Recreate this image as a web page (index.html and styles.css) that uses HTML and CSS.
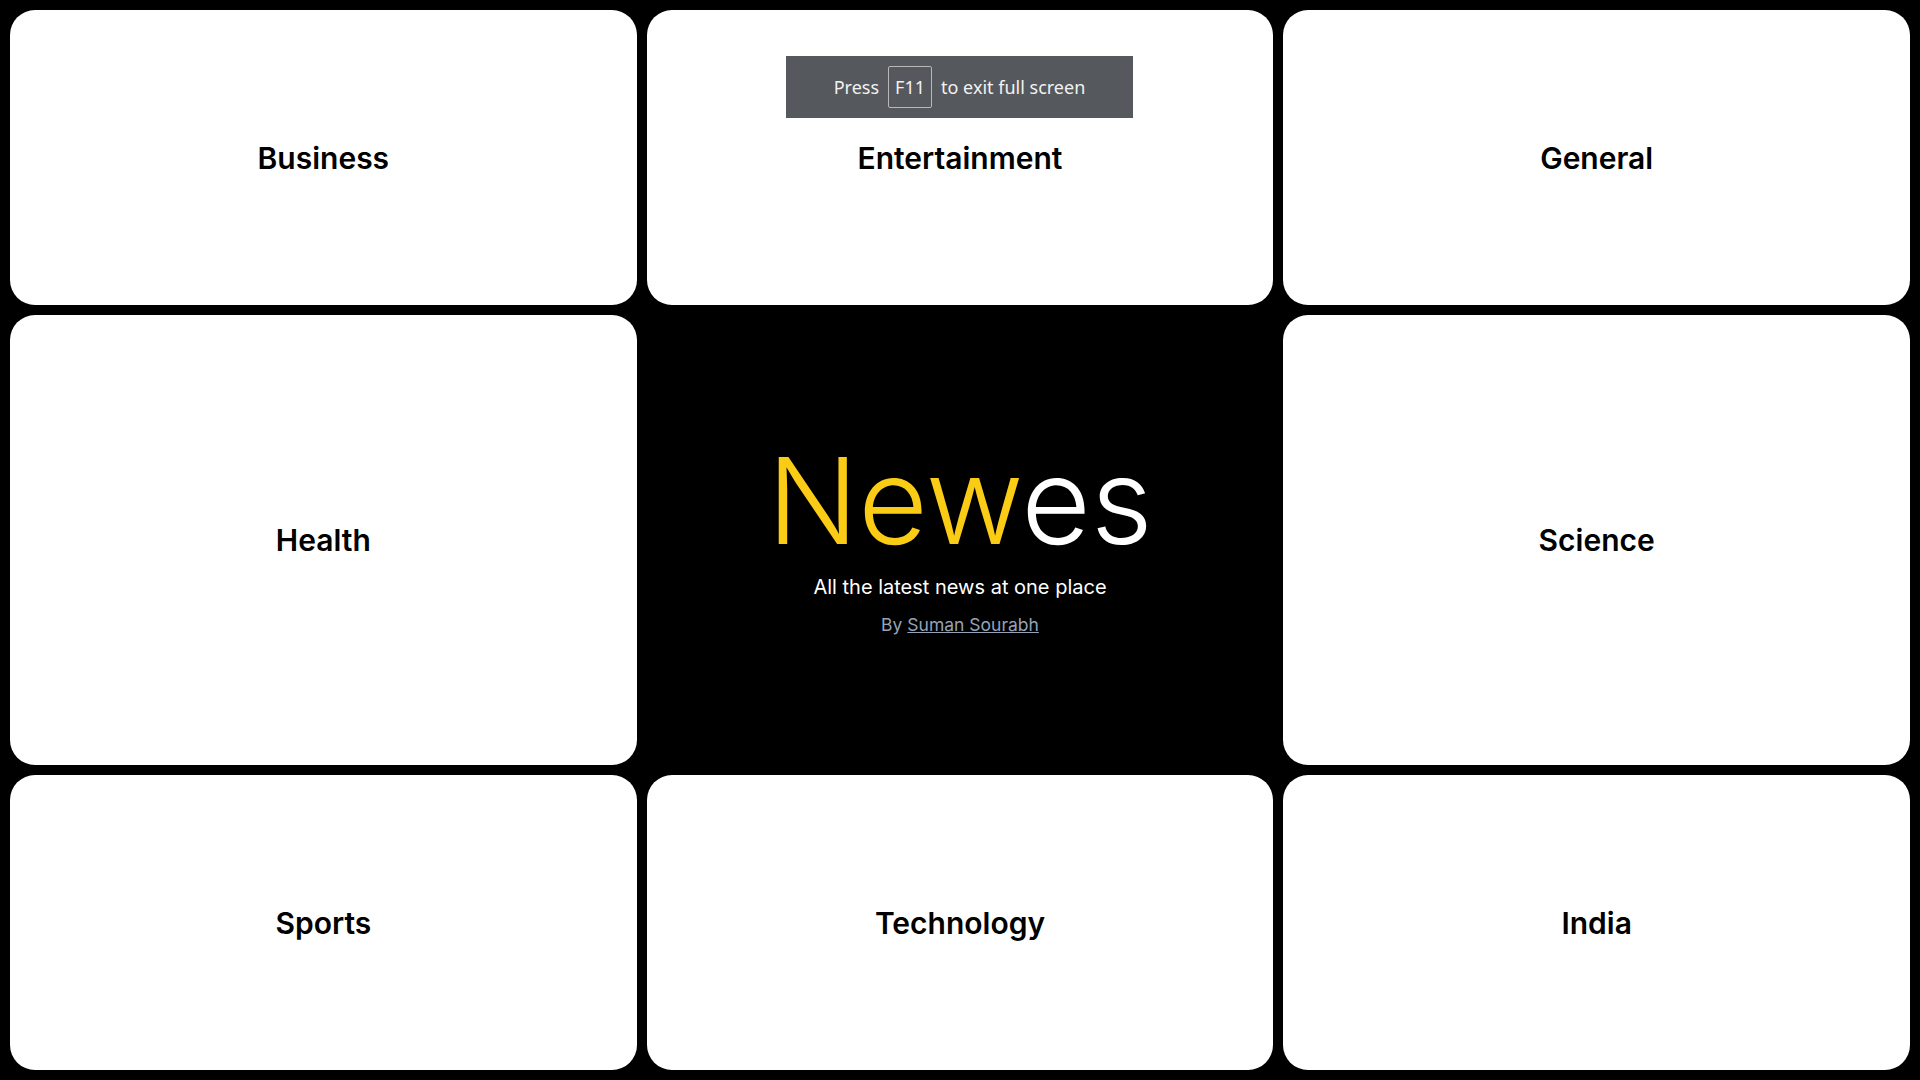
FILE: index.html
```html
<!DOCTYPE html>
<html lang="en">
<head>
<meta charset="utf-8">
<title>Newes</title>
<link rel="stylesheet" href="styles.css">
</head>
<body>
<main class="board">
  <a class="card" href="#">Business</a>
  <a class="card" href="#">Entertainment</a>
  <a class="card" href="#">General</a>
  <a class="card" href="#">Health</a>
  <section class="hero">
    <h1 class="brand"><span class="brand-hl">New</span>es</h1>
    <p class="tagline">All the latest news at one place</p>
    <p class="byline">By <a class="author" href="#">Suman Sourabh</a></p>
  </section>
  <a class="card" href="#">Science</a>
  <a class="card" href="#">Sports</a>
  <a class="card" href="#">Technology</a>
  <a class="card" href="#">India</a>
</main>
<div class="fs-toast">
  <span>Press</span><span class="fs-key">F11</span><span>to exit full screen</span>
</div>
</body>
</html>
```

FILE: styles.css
```css
* { box-sizing: border-box; }
html, body { margin: 0; padding: 0; }
body {
  background: #000;
  font-family: Inter, "Noto Sans", sans-serif;
  width: 1920px;
  height: 1080px;
  overflow: hidden;
}
.board {
  display: grid;
  grid-template-columns: 1fr 1fr 1fr;
  grid-template-rows: 295px 1fr 295px;
  gap: 10px;
  padding: 10px;
  height: 1080px;
}
.card {
  background: #fff;
  border-radius: 25px;
  display: flex;
  align-items: center;
  justify-content: center;
  color: #000;
  text-decoration: none;
  font-size: 30px;
  font-weight: 600;
}
.hero {
  display: flex;
  flex-direction: column;
  align-items: center;
  justify-content: center;
  text-align: center;
}
.brand {
  margin: 0;
  font-size: 120px;
  line-height: 1;
  font-weight: 300;
  color: #fff;
}
.brand-hl { color: #facc15; }
.tagline {
  margin: 12px 0 0;
  font-size: 20px;
  line-height: 28px;
  color: #fff;
}
.byline {
  margin: 10px 0 0;
  font-size: 17.5px;
  line-height: 28px;
  color: #94a3b8;
}
.author { color: #94a3b8; text-decoration: underline; }
.fs-toast {
  position: absolute;
  top: 56px;
  left: 786px;
  width: 347px;
  height: 62px;
  background: #55585c;
  color: #f2f2f2;
  font-family: "Noto Sans", "Open Sans", sans-serif;
  font-size: 18px;
  display: flex;
  align-items: center;
  justify-content: center;
  gap: 9px;
}
.fs-key {
  display: flex;
  align-items: center;
  justify-content: center;
  width: 44px;
  height: 42px;
  border: 1px solid #b8b8b8;
  border-radius: 2px;
}
```
